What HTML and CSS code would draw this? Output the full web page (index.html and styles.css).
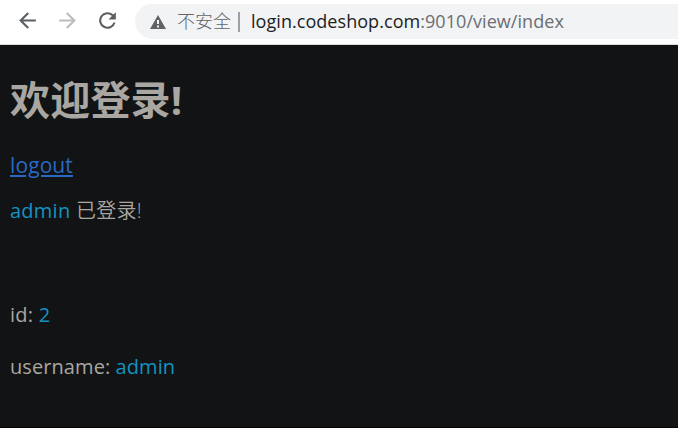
FILE: index.html
```html
<!DOCTYPE html>
<html lang="zh-CN">
<head>
<meta charset="utf-8">
<title>index</title>
<link rel="stylesheet" href="styles.css">
</head>
<body>
<header class="toolbar">
  <svg class="icon" viewBox="0 0 24 24"><path d="M20 11H7.83l5.59-5.59L12 4l-8 8 8 8 1.41-1.41L7.83 13H20z"/></svg>
  <svg class="icon icon-disabled" viewBox="0 0 24 24"><path d="M4 11h12.17l-5.59-5.59L12 4l8 8-8 8-1.41-1.41L16.17 13H4z"/></svg>
  <svg class="icon" viewBox="0 0 24 24"><path d="M17.65 6.35A8 8 0 1 0 19.73 14h-2.08A6 6 0 1 1 12 6c1.66 0 3.14.69 4.22 1.78L13 11h7V4z"/></svg>
  <div class="address">
    <svg class="warning" viewBox="0 0 16 14"><path fill-rule="evenodd" d="M8 0 16 14H0zM7 5v4h2V5zM7 10.5v2h2v-2z"/></svg>
    <span class="security">不安全</span>
    <span class="divider"></span>
    <span class="url"><span class="host">login.codeshop.com</span><span class="path">:9010/view/index</span></span>
  </div>
</header>
<main class="page">
  <h1 class="title">欢迎登录!</h1>
  <p class="row logout"><a class="link" href="#">logout</a></p>
  <p class="row status"><span class="value">admin</span> <span class="message">已登录!</span></p>
  <p class="row user-id">id: <span class="value">2</span></p>
  <p class="row user-name">username: <span class="value">admin</span></p>
</main>
</body>
</html>
```
FILE: styles.css
```css
* { box-sizing: border-box; }
body {
  margin: 0;
  height: 428px;
  overflow: hidden;
  display: flex;
  flex-direction: column;
  background: #111314;
  font-family: "Open Sans", "Noto Sans CJK SC", sans-serif;
}
.toolbar {
  height: 45px;
  flex: none;
  display: flex;
  align-items: flex-start;
  gap: 16px;
  padding: 4px 0 0 15px;
  background: #fff;
  border-bottom: 1px solid #d9dbdd;
}
.icon {
  width: 25px;
  height: 25px;
  flex: none;
  margin: 4px -1px 0 0;
  fill: #5b5e63;
}
.icon-disabled { fill: #babcbe; }
.address {
  flex: 1;
  height: 35px;
  display: flex;
  align-items: center;
  padding-left: 15px;
  background: #f1f3f4;
  border-radius: 18px 0 0 18px;
  font-size: 18px;
  line-height: 35px;
  white-space: nowrap;
}
.warning { width: 16px; height: 14px; fill: #5f6368; }
.security { margin-left: 11px; color: #5f6368; font-weight: 300; }
.divider { width: 2px; height: 20px; margin: 0 11px 0 7px; background: #9da0a3; }
.url { letter-spacing: 0.05px; }
.host { color: #202124; }
.path { color: #6b6e73; }
.page {
  flex: 1;
  padding: 31px 10px 0;
  color: #aaa7a2;
  border-bottom: 1px solid #050506;
}
.title {
  margin: 0 0 29px;
  font-size: 40px;
  line-height: 48px;
  font-weight: 700;
  letter-spacing: 0.2px;
}
.row { margin: 0; height: 24px; font-size: 20px; line-height: 24px; white-space: nowrap; }
.logout { margin-bottom: 22px; }
.status { margin-bottom: 80px; letter-spacing: 0.25px; }
.user-id { margin-bottom: 28px; letter-spacing: 0.25px; }
.user-name { letter-spacing: 0.08px; }
.link {
  font-size: 21px;
  letter-spacing: 0.1px;
  color: #2969c4;
  text-decoration-thickness: 2px;
  text-underline-offset: 2px;
}
.value { color: #1492c0; }
.message { font-weight: 350; }
```
